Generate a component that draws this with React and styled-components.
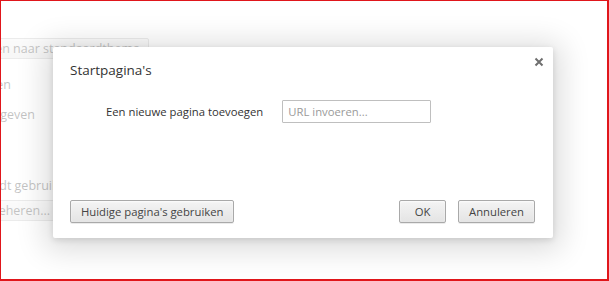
import React from "react";
import styled, { createGlobalStyle } from "styled-components";

const Global = createGlobalStyle`
  html, body { margin: 0; padding: 0; background: #fff; }
  body { font-family: "Open Sans", "Noto Sans", sans-serif; }
  * { box-sizing: border-box; }
`;

const Frame = styled.div`
  position: relative;
  width: 609px;
  height: 281px;
  border: 1px solid #e0161b;
  border-bottom-width: 2px;
  border-right-width: 2px;
  overflow: hidden;
  background: #fff;
`;

const Page = styled.div`
  display: flex;
  flex-direction: column;
  align-items: flex-end;
  width: 200px;
  margin-left: -200px;
  padding-top: 37px;
  font-size: 12.5px;
  color: #2a2a2a;
`;

const PageButton = styled.div`
  height: 21px;
  padding: 0 8px;
  border: 1px solid #b8b8b8;
  border-radius: 2px;
  background: linear-gradient(#f0f0f0, #e0e0e0);
  line-height: 19px;
  white-space: nowrap;
  margin-top: ${(p) => p.$mt || 0}px;
  margin-right: ${(p) => -p.$end}px;
`;

const PageText = styled.div`
  white-space: nowrap;
  margin-top: ${(p) => p.$mt || 0}px;
  margin-right: ${(p) => -p.$end}px;
  line-height: 17px;
`;

const Overlay = styled.div`
  position: absolute;
  inset: 0;
  background: rgba(255, 255, 255, 0.72);
  display: flex;
  align-items: center;
  justify-content: center;
  padding: 4px 2px 0 0;
`;

const Dialog = styled.div`
  width: 500px;
  height: 191px;
  background: #fff;
  border-radius: 2px;
  box-shadow: 0 4px 30px 8px rgba(0, 0, 0, 0.14), 0 2px 6px rgba(0, 0, 0, 0.12);
  display: flex;
  flex-direction: column;
  padding: 0 18px 15px 17px;
  position: relative;
`;

const Title = styled.h1`
  margin: 0;
  padding-top: 14px;
  font-size: 13.5px;
  font-weight: normal;
  color: #333;
  line-height: 18px;
`;

const Close = styled.button`
  position: absolute;
  top: 7px;
  right: 6px;
  width: 16px;
  height: 16px;
  padding: 0;
  border: 0;
  background: none;
  display: flex;
  align-items: center;
  justify-content: center;
`;

const Body = styled.div`
  flex: 1;
  display: flex;
  align-items: flex-start;
  gap: 19px;
  padding: 21px 0 0 36px;
`;

const Label = styled.label`
  font-size: 11.3px;
  color: #333;
  line-height: 23px;
  white-space: nowrap;
`;

const Input = styled.input`
  width: 149px;
  height: 23px;
  border: 1px solid #bfbfbf;
  border-radius: 1px;
  padding: 0 5px;
  font-family: inherit;
  font-size: 11.3px;
  color: #333;
  outline: none;
  &::placeholder { color: #9a9a9a; }
`;

const Footer = styled.div`
  display: flex;
  align-items: center;
  gap: 12px;
`;

const Spacer = styled.div`
  flex: 1;
`;

const Button = styled.button`
  height: 23px;
  min-width: ${(p) => p.$min || 0}px;
  padding: 0 10px;
  border: 1px solid #a9a9a9;
  border-radius: 2px;
  background: linear-gradient(#f4f4f4, #e4e4e4);
  box-shadow: 0 1px 0 rgba(0, 0, 0, 0.08), inset 0 1px 2px rgba(255, 255, 255, 0.75);
  font-family: inherit;
  font-size: 11.3px;
  color: #444;
  line-height: 19px;
`;

export default function App() {
  return (
    <>
      <Global />
      <Frame>
        <Page>
          <PageButton $end={148}>Terugzetten naar standaardthema</PageButton>
          <PageText $mt={17} $end={10}>Thema's ophalen</PageText>
          <PageText $mt={13} $end={34}>Bladwijzerbalk weergeven</PageText>
          <PageText $mt={54} $end={62}>Google wordt gebruikt</PageText>
          <PageButton $mt={6} $end={58}>Zoekmachines beheren...</PageButton>
        </Page>
        <Overlay>
          <Dialog>
            <Title>Startpagina's</Title>
            <Close aria-label="Sluiten">
              <svg width="10" height="10" viewBox="0 0 10 10">
                <path d="M1.5 1.5 L8.5 8.5 M8.5 1.5 L1.5 8.5" stroke="#6f6f6f" strokeWidth="2" />
              </svg>
            </Close>
            <Body>
              <Label>Een nieuwe pagina toevoegen</Label>
              <Input placeholder="URL invoeren..." />
            </Body>
            <Footer>
              <Button>Huidige pagina's gebruiken</Button>
              <Spacer />
              <Button $min={47}>OK</Button>
              <Button $min={77}>Annuleren</Button>
            </Footer>
          </Dialog>
        </Overlay>
      </Frame>
    </>
  );
}
